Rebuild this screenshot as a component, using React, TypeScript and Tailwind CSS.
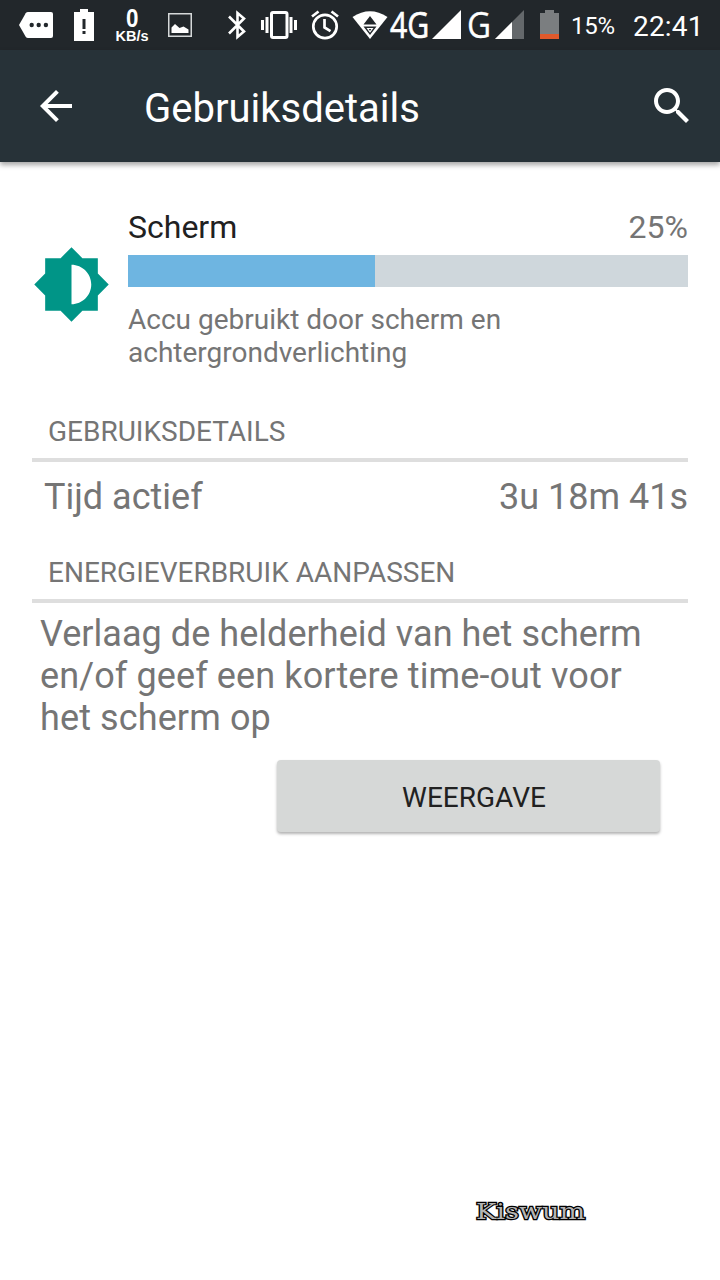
import React from 'react';

function StatusBar() {
  return (
    <div className="flex h-[50px] items-start bg-[#22272b] text-white">
      <svg className="ml-[19px] mt-[12px] h-[26px] w-[34px] shrink-0" viewBox="0 0 34 26">
        <path fill="#fff" d="M9 0h23q2 0 2 2v22q0 2-2 2H9q-1.500 0-2.300-1.200L0 13 6.700 1.200Q7.500 0 9 0z" />
        <g fill="#22272b">
          <circle cx="12.700" cy="13" r="2.200" />
          <circle cx="19.700" cy="13" r="2.200" />
          <circle cx="26.900" cy="13" r="2.200" />
        </g>
      </svg>
      <svg className="ml-[21px] mt-[9px] h-[32px] w-[20px] shrink-0" viewBox="0 0 20 32">
        <path fill="#fff" d="M6 0h8v3h6v29H0V3h6z" />
        <path fill="#22272b" d="M8.500 10h3v10h-3zM8.500 22h3v3h-3z" />
      </svg>
      <div className="ml-[19px] flex w-[38px] shrink-0 flex-col items-center font-['Liberation_Sans'] font-bold">
        <span className="mt-[7px] h-[22px] scale-x-[0.86] text-[26px] leading-[22px]">0</span>
        <span className="text-[14.5px] leading-[14px]">KB/s</span>
      </div>
      <svg className="ml-[17px] mt-[13px] h-[24px] w-[24px] shrink-0" viewBox="0 0 24 24">
        <path fill="none" stroke="#d5d8d9" strokeWidth="1.500" d="M.75.75h22.500v22.500H.75z" />
        <path fill="#fff" d="M3.500 20v-5.500L7 11l4.500 4 4-1.500 5 3v3.500z" />
      </svg>
      <svg className="ml-[36px] mt-[10px] h-[30px] w-[20px] shrink-0" viewBox="0 0 20 30">
        <path fill="none" stroke="#fff" strokeWidth="2.600" d="M1 6.500 16 21.500 9.500 27V3L16 8.500 1 23.500" />
      </svg>
      <svg className="ml-[13px] mt-[11px] h-[28px] w-[36px] shrink-0" viewBox="0 0 36 28">
        <rect x="10.500" y="1.500" width="15.500" height="25" rx="1.500" fill="none" stroke="#fff" strokeWidth="3" />
        <path fill="#fff" d="M0 9h3v10H0zM4.500 6h3v16h-3zM28.500 6h3v16h-3zM33 9h3v10h-3z" />
      </svg>
      <svg className="ml-[14px] mt-[10px] h-[30px] w-[28px] shrink-0" viewBox="0 0 28 30">
        <g fill="none" stroke="#fff" strokeWidth="2.700">
          <circle cx="14" cy="16.500" r="11.700" />
          <path d="M13.500 9v8.500l6 3.700M1 6.500 7.500 1.500M27 6.500 20.500 1.500" />
        </g>
      </svg>
      <svg className="ml-[13px] mt-[11px] h-[28px] w-[36px] shrink-0" viewBox="0 0 36 28">
        <path fill="#fff" d="M.5 6Q18-5.500 35.500 6L18 28z" />
        <path fill="#22272b" d="m18 5 6.500 8.500h-13zM11.500 15.500h13L18 24z" />
        <path fill="#fff" d="M14.500 17h7L18 21.700z" />
        <path fill="#22272b" d="M16.700 18h2.600L18 20z" />
      </svg>
      <span className="ml-[2px] h-[50px] w-[38px] shrink-0 origin-left scale-x-[0.84] whitespace-nowrap font-['Open_Sans'] text-[36px] leading-[50px] [-webkit-text-stroke:0.7px_#fff]">4G</span>
      <svg className="ml-[4px] mt-[10px] h-[29px] w-[29px] shrink-0" viewBox="0 0 29 29">
        <path fill="#fff" d="M29 0v29H0z" />
      </svg>
      <span className="ml-[6px] h-[50px] w-[24px] shrink-0 origin-left scale-x-[0.92] whitespace-nowrap font-['Open_Sans'] text-[36px] leading-[50px] [-webkit-text-stroke:0.3px_#fff]">G</span>
      <svg className="ml-[4px] mt-[10px] h-[29px] w-[29px] shrink-0" viewBox="0 0 29 29">
        <path fill="#64686b" d="M29 0v29H0z" />
        <path fill="#fff" d="M17 12v17H0z" />
      </svg>
      <svg className="ml-[16px] mt-[10px] h-[29px] w-[19px] shrink-0" viewBox="0 0 19 29">
        <path fill="#7b7e80" d="M5 0h9v3h5v21H0V3h5z" />
        <path fill="#e0592b" d="M0 24h19v5H0z" />
      </svg>
      <span className="ml-[12px] w-[44px] shrink-0 whitespace-nowrap text-[24px] leading-[52px] tracking-[-0.3px]">15%</span>
      <span className="ml-[18px] shrink-0 whitespace-nowrap text-[28px] leading-[53px] tracking-[0.2px]">22:41</span>
    </div>
  );
}

function AppBar() {
  return (
    <header className="flex h-[112px] items-center bg-[#273238] pl-8 pr-6 text-white shadow-[0_3px_5px_rgba(0,0,0,0.35)]">
      <svg className="size-12" viewBox="0 0 24 24" fill="currentColor">
        <path d="M20 11H7.830l5.590-5.590L12 4l-8 8 8 8 1.410-1.410L7.830 13H20v-2z" />
      </svg>
      <h1 className="ml-16 mt-[5px] flex-1 text-[40px] leading-[48px]">Gebruiksdetails</h1>
      <svg className="size-12" viewBox="0 0 24 24" fill="currentColor">
        <path d="M15.500 14h-.79l-.28-.27C15.410 12.590 16 11.110 16 9.500 16 5.910 13.090 3 9.500 3S3 5.910 3 9.500 5.910 16 9.500 16c1.610 0 3.090-.59 4.230-1.570l.27.28v.79l5 4.990L20.490 19l-4.990-5zm-6 0C7.010 14 5 11.990 5 9.500S7.010 5 9.500 5 14 7.010 14 9.500 11.990 14 9.500 14z" />
      </svg>
    </header>
  );
}

function Category({ title }: { title: string }) {
  return (
    <h2 className="h-[50px] border-b-4 border-[#dedede] pl-4 text-[28px] leading-[40px]">{title}</h2>
  );
}

export default function App() {
  return (
    <div className="flex h-[1280px] w-[720px] flex-col overflow-hidden bg-white font-['Roboto',sans-serif] text-[#757575]">
      <StatusBar />
      <AppBar />
      <main className="flex flex-1 flex-col px-8 pt-[49px]">
        <section className="flex">
          <svg className="-mr-[14px] mt-[34px] size-[79px] shrink-0" viewBox="0 0 24 24" fill="#009587">
            <path d="M20 15.310L23.310 12 20 8.690V4h-4.690L12 .69 8.690 4H4v4.690L.69 12 4 15.310V20h4.690L12 23.310 15.310 20H20v-4.690zM12 18V6c3.310 0 6 2.690 6 6s-2.690 6-6 6z" />
          </svg>
          <div className="ml-[31px] flex-1">
            <div className="mb-3 flex justify-between text-[32px] leading-8">
              <span className="text-[#212121]">Scherm</span>
              <span>25%</span>
            </div>
            <div className="h-8 bg-[#cfd7dc]">
              <div className="h-full w-[247px] bg-[#6eb5e1]" />
            </div>
            <p className="mt-4 text-[28px] leading-[33px]">
              Accu gebruikt door scherm en
              <br />
              achtergrondverlichting
            </p>
          </div>
        </section>
        <section className="mt-[43px]">
          <Category title="GEBRUIKSDETAILS" />
          <div className="mt-[14px] flex justify-between pl-3 text-[36px] leading-[42px]">
            <span>Tijd actief</span>
            <span>3u 18m 41s</span>
          </div>
        </section>
        <section className="mt-[35px]">
          <Category title="ENERGIEVERBRUIK AANPASSEN" />
          <p className="mt-[10px] pl-2 text-[36px] leading-[42px] tracking-[0.04px]">
            Verlaag de helderheid van het scherm
            <br />
            <span className="tracking-[0.11px]">en/of geef een kortere time-out voor</span>
            <br />
            <span className="tracking-[0.11px]">het scherm op</span>
          </p>
          <button className="ml-[245px] mt-[21px] flex h-[72px] w-[383px] items-center justify-center rounded-[4px] bg-[#d6d8d7] pb-0 pt-[4px] pl-[11px] text-[28px] leading-[34px] text-[#212121] shadow-[0_2px_3px_rgba(0,0,0,0.3)]">
            WEERGAVE
          </button>
        </section>
        <span className="mb-[52px] mt-auto ml-[444px] origin-left scale-x-[1.18] self-start font-['DejaVu_Serif'] text-[23px] leading-[34px] text-[#b4b4b4] [-webkit-text-stroke:2.4px_#000] [paint-order:stroke_fill]">
          Kiswum
        </span>
      </main>
    </div>
  );
}
